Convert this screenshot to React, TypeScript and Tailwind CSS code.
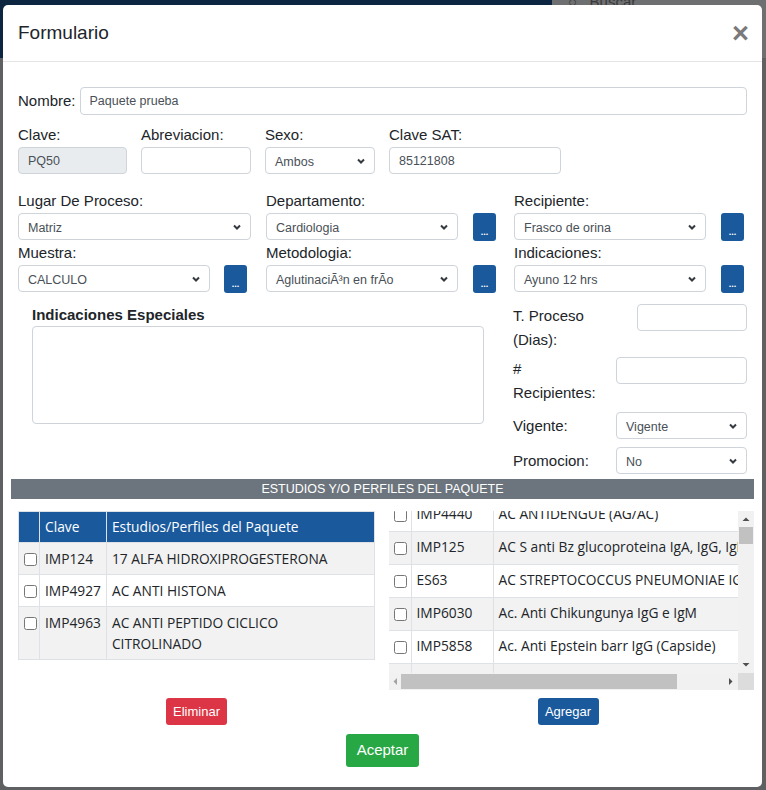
import { ReactNode } from "react";

const label = "font-['Liberation_Sans',sans-serif] text-[15px] leading-[24px] text-[#212529]";
const field =
  "h-[27px] rounded-[4px] border border-[#ced4da] px-[9px] font-['Liberation_Sans',sans-serif] text-[12.5px] text-[#495057] outline-none";
const table = "font-['Open_Sans',sans-serif] text-[13.75px] text-[#212529]";

function Chevron() {
  return (
    <svg width="10" height="8" viewBox="0 0 10 8" className="pointer-events-none absolute right-[9px] top-[10px]">
      <path d="M2 2.5 L5 5.5 L8 2.5" fill="none" stroke="#343a40" strokeWidth="2" />
    </svg>
  );
}

function Select({ value, className = "" }: { value: string; className?: string }) {
  return (
    <div className={`relative ${className}`}>
      <div className={`${field} flex w-full items-center bg-white pt-[3px]`}>{value}</div>
      <Chevron />
    </div>
  );
}

function DotsButton() {
  return (
    <button className="flex h-[28px] w-[23px] shrink-0 items-end justify-center rounded-[3px] bg-[#1a5a9c] pb-[5px] text-[9px] font-bold leading-none text-white">
      ...
    </button>
  );
}

function Field({ title, children, className = "" }: { title: string; children: ReactNode; className?: string }) {
  return (
    <div className={`flex flex-col ${className}`}>
      <span className={label}>{title}</span>
      {children}
    </div>
  );
}

const leftRows = [
  { clave: "IMP124", name: "17 ALFA HIDROXIPROGESTERONA" },
  { clave: "IMP4927", name: "AC ANTI HISTONA" },
  { clave: "IMP4963", name: "AC ANTI PEPTIDO CICLICO CITROLINADO" },
];

const rightRows = [
  { clave: "IMP4440", name: "AC ANTIDENGUE (AG/AC)" },
  { clave: "IMP125", name: "AC S anti Bz glucoproteina IgA, IgG, IgM" },
  { clave: "ES63", name: "AC STREPTOCOCCUS PNEUMONIAE IGG" },
  { clave: "IMP6030", name: "Ac. Anti Chikungunya IgG e IgM" },
  { clave: "IMP5858", name: "Ac. Anti Epstein barr IgG (Capside)" },
  { clave: "ES28", name: "AC. ANTI GLUCOPROTEINAS IGG" },
];

function Check() {
  return <input type="checkbox" className="m-0 h-[13px] w-[13px] align-middle" />;
}

export default function App() {
  return (
    <div className="relative h-[790px] w-[766px] overflow-hidden bg-[#5f6062]">
      {/* page behind the backdrop */}
      <div className="flex h-[58px] w-full">
        <div className="h-full w-[552px] bg-[#0c2641]" />
        <div className="flex h-full flex-1 items-start bg-[#6e6f71] pl-[16px]">
          <span className="mt-[-9px] font-['Liberation_Sans',sans-serif] text-[15px] text-[#3a3a3a]">○&nbsp;&nbsp;&nbsp;Buscar</span>
        </div>
      </div>

      {/* modal */}
      <div className="absolute left-[3px] top-[5px] flex h-[782px] w-[759px] flex-col rounded-[5px] bg-white">
        <div className="flex h-[57px] shrink-0 items-center justify-between border-b border-[#e5e5e5] pl-[15px] pr-[13px]">
          <h1 className="font-['Liberation_Sans',sans-serif] text-[19px] text-[#212529]">Formulario</h1>
          <span className="font-['Liberation_Sans',sans-serif] text-[29px] font-bold leading-none text-[#7a7a7a]">×</span>
        </div>

        <div className="flex flex-col px-[15px] pt-[25px]">
          {/* Nombre */}
          <div className="flex items-center gap-[4px]">
            <span className={label}>Nombre:</span>
            <input className={`${field} h-[28px] flex-1 bg-white px-[7px]`} defaultValue="Paquete prueba" />
          </div>

          {/* Clave row */}
          <div className="mt-[8px] flex gap-[14px]">
            <Field title="Clave:" className="w-[109px]">
              <input className={`${field} bg-[#e9ecef]`} defaultValue="PQ50" readOnly />
            </Field>
            <Field title="Abreviacion:" className="w-[110px]">
              <input className={`${field} bg-white`} />
            </Field>
            <Field title="Sexo:" className="w-[110px]">
              <Select value="Ambos" />
            </Field>
            <Field title="Clave SAT:" className="w-[172px]">
              <input className={`${field} bg-white px-[8px]`} defaultValue="85121808" />
            </Field>
          </div>

          {/* Selects */}
          <div className="mt-[15px] grid grid-cols-[233px_233px_234px] gap-x-[15px]">
            <Field title="Lugar De Proceso:">
              <Select value="Matriz" />
            </Field>
            <Field title="Departamento:">
              <div className="flex gap-[15px]">
                <Select value="Cardiologia" className="w-[192px]" />
                <DotsButton />
              </div>
            </Field>
            <Field title="Recipiente:">
              <div className="flex gap-[15px]">
                <Select value="Frasco de orina" className="w-[192px]" />
                <DotsButton />
              </div>
            </Field>
            <Field title="Muestra:">
              <div className="flex gap-[14px]">
                <Select value="CALCULO" className="w-[192px]" />
                <DotsButton />
              </div>
            </Field>
            <Field title="Metodologia:">
              <div className="flex gap-[15px]">
                <Select value="AglutinaciÃ³n en frÃo" className="w-[192px]" />
                <DotsButton />
              </div>
            </Field>
            <Field title="Indicaciones:">
              <div className="flex gap-[15px]">
                <Select value="Ayuno 12 hrs" className="w-[192px]" />
                <DotsButton />
              </div>
            </Field>
          </div>

          {/* Indicaciones especiales + right fields */}
          <div className="mt-[11px] flex gap-[15px]">
            <div className="flex w-[480px] shrink-0 flex-col px-[14px]">
              <span className="font-['Liberation_Sans',sans-serif] text-[15px] font-bold leading-[22px] text-[#212529]">
                Indicaciones Especiales
              </span>
              <textarea className="h-[98px] resize-none rounded-[4px] border border-[#ced4da] outline-none" />
            </div>
            <div className="flex min-w-0 flex-1 flex-col">
              <div className="flex items-start gap-[14px]">
                <span className={`${label} w-[110px] shrink-0`}>T. Proceso (Dias):</span>
                <input className={`${field} min-w-0 flex-1 bg-white`} />
              </div>
              <div className="mt-[5px] flex items-start gap-[13px]">
                <span className={`${label} w-[90px] shrink-0`}># Recipientes:</span>
                <input className={`${field} min-w-0 flex-1 bg-white`} />
              </div>
              <div className="mt-[7px] flex items-center gap-[13px]">
                <span className={`${label} w-[90px] shrink-0`}>Vigente:</span>
                <Select value="Vigente" className="min-w-0 flex-1" />
              </div>
              <div className="mt-[8px] flex items-center gap-[13px]">
                <span className={`${label} w-[90px] shrink-0`}>Promocion:</span>
                <Select value="No" className="min-w-0 flex-1" />
              </div>
            </div>
          </div>

          {/* band */}
          <div className="mx-[-7px] mt-[5px] flex h-[20px] items-center justify-center bg-[#6c757d] font-['Liberation_Sans',sans-serif] text-[12.5px] text-white">
            ESTUDIOS Y/O PERFILES DEL PAQUETE
          </div>

          {/* tables */}
          <div className="mt-[12px] flex items-start gap-[14px]">
            <table className={`${table} w-[357px] shrink-0 border-collapse border border-[#dee2e6]`}>
              <thead>
                <tr className="h-[31px] bg-[#1a5a9c] text-left text-white">
                  <th className="w-[21px] border-r border-[#dee2e6]" />
                  <th className="w-[65px] border-r border-[#dee2e6] px-[5px] font-normal">Clave</th>
                  <th className="px-[5px] font-normal">Estudios/Perfiles del Paquete</th>
                </tr>
              </thead>
              <tbody>
                {leftRows.map((r, i) => (
                  <tr key={r.clave} className={`border-t border-[#dee2e6] align-top ${i % 2 === 0 ? "bg-[#f2f2f2]" : "bg-white"}`}>
                    <td className="border-r border-[#dee2e6] pl-[5px] pt-[5px]">
                      <Check />
                    </td>
                    <td className="border-r border-[#dee2e6] px-[5px] py-[5px] leading-[21px]">{r.clave}</td>
                    <td className="py-[5px] pl-[5px] pr-[12px] leading-[21px]">{r.name}</td>
                  </tr>
                ))}
              </tbody>
            </table>

            <div className="mr-[-7px] flex h-[179px] min-w-0 flex-1 flex-col">
              <div className="flex h-[162px]">
                <div className="min-w-0 flex-1 overflow-hidden">
                  <table className={`${table} -mt-[13px] w-[520px] border-collapse`}>
                    <tbody>
                      {rightRows.map((r, i) => (
                        <tr key={r.clave} className={`h-[33px] border-b border-[#dee2e6] ${i % 2 === 1 ? "bg-[#f2f2f2]" : "bg-white"}`}>
                          <td className="w-[22px] border-r border-[#dee2e6] pl-[5px]">
                            <Check />
                          </td>
                          <td className="w-[82px] border-r border-[#dee2e6] px-[5px]">{r.clave}</td>
                          <td className="whitespace-nowrap px-[5px]">{r.name}</td>
                        </tr>
                      ))}
                    </tbody>
                  </table>
                </div>
                {/* vertical scrollbar */}
                <div className="flex w-[16px] shrink-0 flex-col items-center bg-[#f1f1f1]">
                  <svg width="16" height="16" viewBox="0 0 16 16">
                    <path d="M4.5 10 L8 6.5 L11.5 10 Z" fill="#505050" />
                  </svg>
                  <div className="mx-[1px] h-[17px] w-[14px] bg-[#c1c1c1]" />
                  <div className="flex-1" />
                  <svg width="16" height="16" viewBox="0 0 16 16">
                    <path d="M4.5 6 L8 9.5 L11.5 6 Z" fill="#505050" />
                  </svg>
                </div>
              </div>
              {/* horizontal scrollbar */}
              <div className="flex h-[17px]">
                <div className="flex flex-1 items-center bg-[#f1f1f1]">
                  <svg width="12" height="17" viewBox="0 0 12 17">
                    <path d="M8 5 L4.5 8.5 L8 12 Z" fill="#a3a3a3" />
                  </svg>
                  <div className="h-[15px] w-[276px] bg-[#c1c1c1]" />
                  <div className="flex-1" />
                  <svg width="14" height="17" viewBox="0 0 14 17">
                    <path d="M5 5 L8.5 8.5 L5 12 Z" fill="#505050" />
                  </svg>
                </div>
                <div className="w-[16px] bg-[#dcdcdc]" />
              </div>
            </div>
          </div>

          {/* action buttons */}
          <div className="mt-[8px] flex gap-[14px]">
            <div className="flex w-[357px] justify-center">
              <button className="h-[27px] w-[61px] rounded-[3px] bg-[#dc3545] font-['Liberation_Sans',sans-serif] text-[13px] text-white">
                Eliminar
              </button>
            </div>
            <div className="flex flex-1 justify-center">
              <button className="h-[27px] w-[61px] rounded-[3px] bg-[#1a5a9c] font-['Liberation_Sans',sans-serif] text-[13px] text-white">
                Agregar
              </button>
            </div>
          </div>

          <div className="mt-[9px] flex justify-center">
            <button className="h-[33px] w-[73px] rounded-[3px] bg-[#28a745] font-['Liberation_Sans',sans-serif] text-[15px] text-white">
              Aceptar
            </button>
          </div>
        </div>
      </div>
    </div>
  );
}
